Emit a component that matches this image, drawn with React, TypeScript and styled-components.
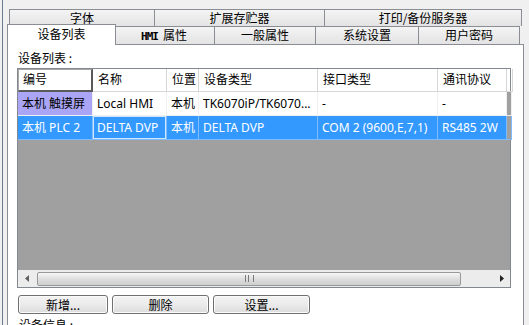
import React from "react";
import styled, { createGlobalStyle } from "styled-components";

const Global = createGlobalStyle`
  html, body { margin: 0; padding: 0; background: #f0f0f0; overflow: hidden; }
  body {
    width: 529px; height: 325px;
    font-family: "Noto Sans", "Noto Sans CJK SC", sans-serif;
    color: #000;
  }
`;

const Window = styled.div`
  margin-left: 2px;
  border-left: 1px solid #6c7b92;
  height: 325px;
  box-sizing: border-box;
  padding: 9px 0 0 4px;
  overflow: hidden;
`;

const Tabs = styled.div`
  width: 517px;
  display: flex;
  flex-direction: column;
`;

const TabRow = styled.div<{ $h: number }>`
  display: flex;
  height: ${(p) => p.$h}px;
  padding-left: 2px;
`;

const Tab = styled.div<{ $w: number; $sel?: boolean }>`
  width: ${(p) => p.$w}px;
  flex: none;
  box-sizing: border-box;
  border: 1px solid #8a8d94;
  border-bottom: none;
  margin-left: -1px;
  &:first-child { margin-left: 0; }
  background: linear-gradient(#f4f4f4, #e3e3e3);
  font-family: "Noto Sans CJK SC", sans-serif;
  font-size: 12px;
  line-height: 15px;
  text-align: center;
  white-space: nowrap;
  ${(p) =>
    p.$sel &&
    `
    position: relative;
    z-index: 1;
    background: #fff;
    margin: -2px -2px -1px -2px;
    &:first-child { margin-left: -2px; }
    height: 21px;
    line-height: 17px;
    border-bottom: none;
  `}
`;

const Mono = styled.span`
  font-family: "DejaVu Sans Mono", monospace;
  font-size: 11px;
  font-weight: bold;
  letter-spacing: -1px;
  margin-right: 5px;
`;

const Panel = styled.div`
  width: 517px;
  box-sizing: border-box;
  height: 300px;
  border: 1px solid #8a8d94;
  background: #fff;
  padding: 5px 0 0 9px;
`;

const Label = styled.div`
  font-family: "Noto Sans CJK SC", sans-serif;
  font-size: 12px;
  line-height: 16px;
  margin-left: 1px;
  height: 18px;
`;

const Table = styled.div`
  width: 494px;
  height: 220px;
  box-sizing: border-box;
  border: 1px solid #828790;
  display: flex;
  flex-direction: column;
  font-family: "Noto Sans", "Noto Sans CJK SC", sans-serif;
  font-size: 12px;
`;

const cols = "75px 74px 32px 119px 120px 69px 1fr";

const HeadRow = styled.div`
  display: grid;
  grid-template-columns: ${cols};
  height: 23px;
  background: #fff;
  flex: none;
`;

const HeadCell = styled.div<{ $first?: boolean }>`
  box-sizing: border-box;
  border-right: 1px solid #d6d6d6;
  border-bottom: 1px solid #d6d6d6;
  padding-left: 5px;
  line-height: 22px;
  white-space: nowrap;
  overflow: hidden;
  ${(p) =>
    p.$first &&
    `
    border: 1px solid #a8a8a8;
    border-right: 2px solid #5a5a5a;
    border-bottom: 2px solid #5a5a5a;
    line-height: 20px;
    padding-left: 4px;
  `}
`;

const BodyRow = styled.div<{ $sel?: boolean }>`
  display: grid;
  grid-template-columns: ${cols};
  height: 24px;
  flex: none;
  background: ${(p) => (p.$sel ? "#3399ff" : "#fff")};
  color: ${(p) => (p.$sel ? "#fff" : "#000")};
`;

const Cell = styled.div<{ $bg?: string; $sep: string; $focus?: boolean }>`
  box-sizing: border-box;
  background: ${(p) => p.$bg || "transparent"};
  border-right: 1px solid ${(p) => p.$sep};
  border-bottom: 1px solid ${(p) => p.$sep};
  padding-left: 4px;
  line-height: 23px;
  white-space: nowrap;
  overflow: hidden;
  ${(p) => p.$focus && `box-shadow: inset 0 0 0 1px #cfe6ff;`}
`;

const Empty = styled.div`
  flex: 1;
  background: #a0a0a0;
`;

const HScroll = styled.div`
  height: 17px;
  flex: none;
  background: #ececec;
  display: flex;
  align-items: center;
`;

const Arrow = styled.div`
  width: 17px;
  height: 17px;
  display: flex;
  align-items: center;
  justify-content: center;
  flex: none;
`;

const Track = styled.div`
  flex: 1;
  height: 17px;
  display: flex;
  align-items: center;
  padding: 0 32px 0 2px;
`;

const Thumb = styled.div`
  flex: 1;
  height: 14px;
  box-sizing: border-box;
  border: 1px solid #989898;
  border-radius: 2px;
  background: linear-gradient(#f6f6f6, #dcdcdc 55%, #cfcfcf);
  display: flex;
  align-items: center;
  justify-content: center;
`;

const Grip = styled.div`
  width: 7px;
  height: 7px;
  border-left: 1px solid #7a7a7a;
  border-right: 1px solid #7a7a7a;
  position: relative;
  &::after {
    content: "";
    position: absolute;
    left: 2px;
    top: 0;
    width: 1px;
    height: 7px;
    background: #7a7a7a;
  }
`;

const Buttons = styled.div`
  display: flex;
  gap: 4px;
  margin-top: 7px;
  margin-left: 1px;
`;

const Button = styled.div<{ $w: number }>`
  width: ${(p) => p.$w}px;
  height: 19px;
  box-sizing: border-box;
  border: 1px solid #707070;
  border-radius: 3px;
  background: linear-gradient(#f3f3f3, #ebebeb 50%, #dcdcdc);
  box-shadow: inset 0 0 0 1px #fbfbfb;
  font-family: "Noto Sans CJK SC", sans-serif;
  font-size: 12px;
  line-height: 17px;
  text-align: center;
`;

const Footer = styled.div`
  font-family: "Noto Sans CJK SC", sans-serif;
  font-size: 12px;
  line-height: 16px;
  margin: 3px 0 0 2px;
`;

const rows = [
  { c1: "本机 触摸屏", c2: "Local HMI", c3: "本机", c4: "TK6070iP/TK6070...", c5: "-", c6: "-" },
  { c1: "本机 PLC 2", c2: "DELTA DVP", c3: "本机", c4: "DELTA DVP", c5: "COM 2 (9600,E,7,1)", c6: "RS485 2W" },
];

export default function App() {
  return (
    <>
      <Global />
      <Window>
        <Tabs>
          <TabRow $h={17}>
            <Tab $w={146}>字体</Tab>
            <Tab $w={171}>扩展存贮器</Tab>
            <Tab $w={198}>打印/备份服务器</Tab>
          </TabRow>
          <TabRow $h={18}>
            <Tab $w={109} $sel>设备列表</Tab>
            <Tab $w={102}>
              <Mono>HMI</Mono>属性
            </Tab>
            <Tab $w={102}>一般属性</Tab>
            <Tab $w={104}>系统设置</Tab>
            <Tab $w={102}>用户密码</Tab>
          </TabRow>
        </Tabs>
        <Panel>
          <Label>设备列表 :</Label>
          <Table>
            <HeadRow>
              <HeadCell $first>编号</HeadCell>
              <HeadCell>名称</HeadCell>
              <HeadCell>位置</HeadCell>
              <HeadCell>设备类型</HeadCell>
              <HeadCell>接口类型</HeadCell>
              <HeadCell>通讯协议</HeadCell>
              <HeadCell />
            </HeadRow>
            {rows.map((r, i) => {
              const sel = i === 1;
              const sep = sel ? "#7fbcff" : "#f0f0f0";
              return (
                <BodyRow key={i} $sel={sel}>
                  <Cell $sep={sep} $bg={sel ? undefined : "#aaa5f4"}>{r.c1}</Cell>
                  <Cell $sep={sep} $focus={sel}>{r.c2}</Cell>
                  <Cell $sep={sep}>{r.c3}</Cell>
                  <Cell $sep={sep}>{r.c4}</Cell>
                  <Cell $sep={sep}>{r.c5}</Cell>
                  <Cell $sep={sep}>{r.c6}</Cell>
                  <Cell $sep={sep} $bg="#a0a0a0" />
                </BodyRow>
              );
            })}
            <Empty />
            <HScroll>
              <Arrow>
                <svg width="4" height="7" viewBox="0 0 4 7">
                  <path d="M4 0 L0 3.5 L4 7 Z" fill="#606060" />
                </svg>
              </Arrow>
              <Track>
                <Thumb>
                  <Grip />
                </Thumb>
              </Track>
              <Arrow>
                <svg width="4" height="7" viewBox="0 0 4 7">
                  <path d="M0 0 L4 3.5 L0 7 Z" fill="#202020" />
                </svg>
              </Arrow>
            </HScroll>
          </Table>
          <Buttons>
            <Button $w={90}>新增...</Button>
            <Button $w={97}>删除</Button>
            <Button $w={97}>设置...</Button>
          </Buttons>
          <Footer>设备信息 :</Footer>
        </Panel>
      </Window>
    </>
  );
}
